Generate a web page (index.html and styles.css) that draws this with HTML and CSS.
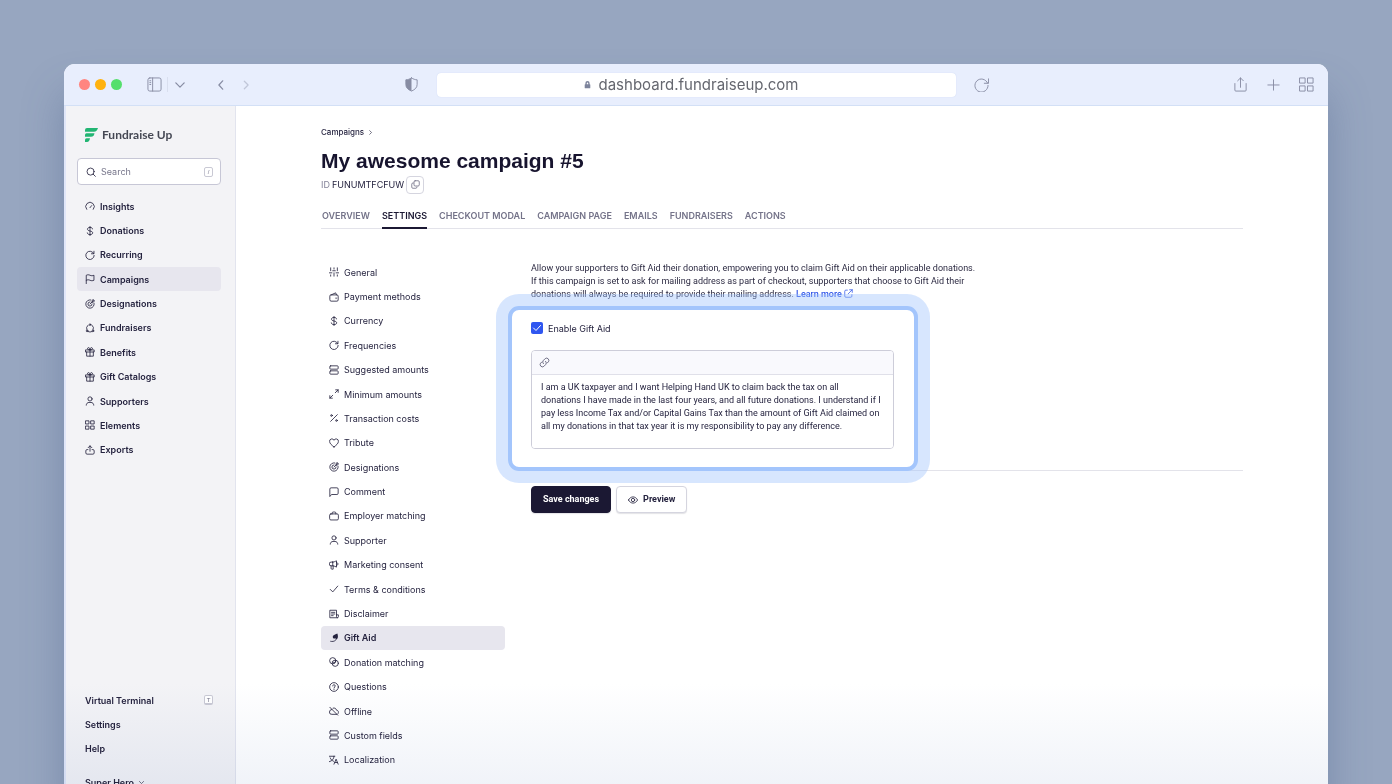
FILE: index.html
```html
<!DOCTYPE html>
<html lang="en">
<head>
<meta charset="utf-8">
<meta name="viewport" content="width=device-width, initial-scale=1">
<title>My awesome campaign #5 – Fundraise Up</title>
<link rel="stylesheet" href="styles.css">
</head>
<body>
<svg class="sprite" aria-hidden="true">
  <symbol id="gauge" viewBox="0 0 24 24"><path d="M4 20a10.300 10.300 0 1 1 16 0M12 16l4-5"/></symbol>
  <symbol id="dollar" viewBox="0 0 24 24"><path d="M12 1v22M18 7c0-2.300-2-3.500-6-3.500S6 5 6 7.500s2 3.700 6 4.500 6.500 2 6.500 4.500-2.500 4-6.500 4S5.500 19 5.500 16.500"/></symbol>
  <symbol id="refresh" viewBox="0 0 24 24"><path d="M21.500 3v6h-6M21 8.500A10 10 0 1 0 22 13"/></symbol>
  <symbol id="flag" viewBox="0 0 24 24"><path d="M3 23V3c3-1.500 6-1.500 9 0s6 1.500 9.500 0v12c-3.500 1.500-6.500 1.500-9.500 0s-6-1.500-9 0"/></symbol>
  <symbol id="target" viewBox="0 0 24 24"><path d="M14 2.200A10 10 0 1 0 21.800 10M12 7a5 5 0 1 0 5 5M12 12l6-6M17 7V3.500L20 1v3h3l-2.500 3z"/></symbol>
  <symbol id="ring" viewBox="0 0 24 24"><path d="M7 5.500a9 9 0 0 0-2.500 11M17 5.500a9 9 0 0 1 2.500 11M7 20.500a10 10 0 0 0 10 0"/><circle cx="12" cy="4" r="2"/><circle cx="5" cy="19" r="2"/><circle cx="19" cy="19" r="2"/></symbol>
  <symbol id="gift" viewBox="0 0 24 24"><path d="M2 7h20v5H2zM4 12v10h16V12M12 7v15M12 7C7 7 6 5.500 6 4s1.200-2.500 2.500-2.500C11 1.500 12 4 12 7c0-3 1-5.500 3.500-5.500C16.800 1.500 18 2.500 18 4s-1 3-6 3"/></symbol>
  <symbol id="person" viewBox="0 0 24 24"><circle cx="12" cy="7" r="5"/><path d="M3 22c0-4 3-6.500 6.500-6.500h5c3.500 0 6.500 2.500 6.500 6.500"/></symbol>
  <symbol id="grid" viewBox="0 0 24 24"><path d="M2 2h7.500v7.500H2zM14.500 2H22v7.500h-7.500zM2 14.500h7.500V22H2zM14.500 14.500H22V22h-7.500z"/></symbol>
  <symbol id="export" viewBox="0 0 24 24"><path d="M12 15V2M7.500 6.500 12 2l4.500 4.500M7 11H5a3 3 0 0 0-3 3v5a3 3 0 0 0 3 3h14a3 3 0 0 0 3-3v-5a3 3 0 0 0-3-3h-2"/></symbol>
  <symbol id="sliders" viewBox="0 0 24 24"><path d="M4 2v7M4 19v3M1 14h6M12 2v3M12 14v8M9 9h6M20 2v7M20 19v3M17 14h6"/></symbol>
  <symbol id="wallet" viewBox="0 0 24 24"><path d="M2 9a2 2 0 0 1 2-2h15a3 3 0 0 1 3 3v9a3 3 0 0 1-3 3H5a3 3 0 0 1-3-3zM5 7l11-5 2 5M17 14v2"/></symbol>
  <symbol id="rows" viewBox="0 0 24 24"><rect x="2" y="2" width="20" height="8" rx="2"/><rect x="2" y="14" width="20" height="8" rx="2"/></symbol>
  <symbol id="expand" viewBox="0 0 24 24"><path d="M16 2h6v6M22 2l-7 7M8 22H2v-6M2 22l7-7"/></symbol>
  <symbol id="percent" viewBox="0 0 24 24"><path d="M20 4 4 20"/><circle cx="6" cy="6" r="2"/><circle cx="18" cy="18" r="2"/></symbol>
  <symbol id="heart" viewBox="0 0 24 24"><path d="M12 21.500C6 17 1.500 13 1.500 8.500A5.500 5.500 0 0 1 12 5.500a5.500 5.500 0 0 1 10.500 3c0 4.500-4.500 8.500-10.500 13z"/></symbol>
  <symbol id="comment" viewBox="0 0 24 24"><path d="M2 22V5a3 3 0 0 1 3-3h14a3 3 0 0 1 3 3v10a3 3 0 0 1-3 3H7z"/></symbol>
  <symbol id="case" viewBox="0 0 24 24"><rect x="1.500" y="7" width="21" height="14.500" rx="3"/><path d="M7.500 7V5a2.500 2.500 0 0 1 2.500-2.500h4A2.500 2.500 0 0 1 16.500 5v2"/></symbol>
  <symbol id="megaphone" viewBox="0 0 24 24"><path d="M9 5H5a4 4 0 0 0 0 9h4c4 0 6 2 9 3V2c-3 1-5 3-9 3zM9 5v9M5 14v6a2 2 0 0 0 2 2h3v-8M18 6c5 0 5 7 0 7"/></symbol>
  <symbol id="check" viewBox="0 0 24 24"><path d="m3 13 6 6L21 5"/></symbol>
  <symbol id="document" viewBox="0 0 24 24"><path d="M18 14V3H2v18h18a2.500 2.500 0 0 0 2.500-2.500V14H18v4.500A2.500 2.500 0 0 0 20 21M6 8h8M6 12h8M6 16h4"/></symbol>
  <symbol id="giftaid" viewBox="0 0 24 24"><path d="M4 20c9 2 15-3 15-11"/><path class="solid" d="M9 9c0-4 5-5 11-8 2 5 2 10-1 14l-3-2c-4 1-7 0-7-4z"/></symbol>
  <symbol id="overlap" viewBox="0 0 24 24"><circle cx="9" cy="9" r="7.500"/><circle cx="15" cy="15" r="7.500"/><path d="m9 12 3 3 4-5"/></symbol>
  <symbol id="question" viewBox="0 0 24 24"><circle cx="12" cy="12" r="10.500"/><path d="M9 9.500C9 7.500 10.500 6.500 12 6.500s3 1 3 3c0 2-3 2.500-3 4.500M12 17v1"/></symbol>
  <symbol id="cloudoff" viewBox="0 0 24 24"><path d="m2 3 19 19M7 8a7 7 0 0 0-6 6.500A5.500 5.500 0 0 0 7 20h12M10 5c4-1 7 1 8 5 4 0 6 4.500 4 8"/></symbol>
  <symbol id="translate" viewBox="0 0 24 24"><path d="M1 3h13M3 7c1 4 4 6 8 8M12 3c0 6-4 11-11 13M12 22l5-12 5 12M14 18h6"/></symbol>
  <symbol id="search" viewBox="0 0 24 24"><circle cx="11" cy="11" r="8.500"/><path d="m17 17 5.500 5.500"/></symbol>
  <symbol id="copy" viewBox="0 0 24 24"><rect x="8" y="2" width="14" height="14" rx="3"/><path d="M6 8H5a3 3 0 0 0-3 3v8a3 3 0 0 0 3 3h8a3 3 0 0 0 3-3"/></symbol>
  <symbol id="external" viewBox="0 0 24 24"><path d="M9 3H5a3 3 0 0 0-3 3v13a3 3 0 0 0 3 3h13a3 3 0 0 0 3-3v-4M15 2h7v7M22 2 11 13"/></symbol>
  <symbol id="link" viewBox="0 0 24 24"><path d="M9.500 14.500a5 5 0 0 1 0-7l4-4a5 5 0 0 1 7 7L18 13M14.500 9.500a5 5 0 0 1 0 7l-4 4a5 5 0 0 1-7-7L6 11"/></symbol>
  <symbol id="eye" viewBox="0 0 24 24"><path d="M1 12c5-10 17-10 22 0-5 10-17 10-22 0z"/><circle cx="12" cy="12" r="4"/></symbol>
  <symbol id="right" viewBox="0 0 24 24"><path d="m8 3 9 9-9 9"/></symbol>
  <symbol id="left" viewBox="0 0 24 24"><path d="m16 2-9 10 9 10"/></symbol>
  <symbol id="down" viewBox="0 0 24 24"><path d="m2 7 10 10L22 7"/></symbol>
</svg>

<div class="window">
  <header class="toolbar">
    <div class="toolbar-left">
      <div class="lights"><span class="light red"></span><span class="light amber"></span><span class="light green"></span></div>
      <button class="tool panel" aria-label="Sidebar"><svg viewBox="0 0 16 16"><rect x="1" y="1" width="14" height="14" rx="2"/><path d="M6 1v14M3 4h1M3 6h1M3 8h1"/></svg></button>
      <button class="tool tabs-menu" aria-label="Tab groups"><svg class="small"><use href="#down"/></svg></button>
      <button class="tool back" aria-label="Back"><svg class="small"><use href="#left"/></svg></button>
      <button class="tool forward" aria-label="Forward"><svg class="small"><use href="#right"/></svg></button>
      <button class="tool shield" aria-label="Privacy report"><svg viewBox="0 0 16 16"><path d="M8 1c2 1.300 4 2 6 2v5c0 3.500-2.500 5.500-6 7-3.500-1.500-6-3.500-6-7V3c2 0 4-.7 6-2z"/><path class="solid" d="M8 1v14c-3.500-1.500-6-3.500-6-7V3c2 0 4-.7 6-2z"/></svg></button>
    </div>
    <div class="address">
      <svg viewBox="0 0 10 12"><path d="M3 6V4a2 2 0 0 1 4 0v2"/><rect class="solid" x="1" y="5.500" width="8" height="6" rx="1"/></svg>
      <span>dashboard.fundraiseup.com</span>
    </div>
    <div class="toolbar-right">
      <button class="tool reload" aria-label="Reload"><svg viewBox="0 0 16 16"><path d="M14.500 6.500A7 7 0 1 0 15 9M15.500 2v4.700H11"/></svg></button>
      <button class="tool" aria-label="Share"><svg viewBox="0 0 16 16"><path d="M2 7v7a1 1 0 0 0 1 1h10a1 1 0 0 0 1-1V7M8 11V1M5 4l3-3 3 3"/></svg></button>
      <button class="tool" aria-label="New tab"><svg viewBox="0 0 16 16"><path d="M8 3v11M2 8.500h12"/></svg></button>
      <button class="tool" aria-label="Tab overview"><svg viewBox="0 0 16 16"><path d="M1 1h5.500v5.500H1zM9.500 1H15v5.500H9.500zM1 9.500h5.500V15H1zM9.500 9.500H15V15H9.500z"/></svg></button>
    </div>
  </header>

  <div class="app">
    <aside class="sidebar">
      <a class="logo" href="#"><svg viewBox="0 0 14 14"><path d="M2 0h11q-1 3.700-4 3.700H0V2q0-2 2-2zM1.500 5.300h8q-.5 3.500-3.500 3.500H0V7q0-1.700 1.500-1.700zM1.500 10.300h3.500q-.5 3.700-3 3.700H0v-2q0-1.700 1.500-1.700z"/></svg><span>Fundraise Up</span></a>
      <label class="search"><svg class="icon"><use href="#search"/></svg><input type="text" placeholder="Search" aria-label="Search"><kbd class="key">/</kbd></label>
      <nav class="main-nav">
        <a href="#"><svg class="icon"><use href="#gauge"/></svg>Insights</a>
        <a href="#"><svg class="icon"><use href="#dollar"/></svg>Donations</a>
        <a href="#"><svg class="icon"><use href="#refresh"/></svg>Recurring</a>
        <a href="#" class="active"><svg class="icon"><use href="#flag"/></svg>Campaigns</a>
        <a href="#"><svg class="icon"><use href="#target"/></svg>Designations</a>
        <a href="#"><svg class="icon"><use href="#ring"/></svg>Fundraisers</a>
        <a href="#"><svg class="icon"><use href="#gift"/></svg>Benefits</a>
        <a href="#"><svg class="icon"><use href="#gift"/></svg>Gift Catalogs</a>
        <a href="#"><svg class="icon"><use href="#person"/></svg>Supporters</a>
        <a href="#"><svg class="icon"><use href="#grid"/></svg>Elements</a>
        <a href="#"><svg class="icon"><use href="#export"/></svg>Exports</a>
      </nav>
      <nav class="foot-nav">
        <a href="#">Virtual Terminal<kbd class="key raised">T</kbd></a>
        <a href="#">Settings</a>
        <a href="#">Help</a>
        <a href="#" class="account">Super Hero<svg class="mini"><use href="#down"/></svg></a>
      </nav>
    </aside>

    <main class="main">
      <nav class="crumbs"><a href="#">Campaigns</a><svg class="mini"><use href="#right"/></svg></nav>
      <h1>My awesome campaign #5</h1>
      <div class="id-row"><span class="muted">ID</span><span>FUNUMTFCFUW</span><button class="copy" aria-label="Copy ID"><svg><use href="#copy"/></svg></button></div>
      <nav class="tabs">
        <a href="#">OVERVIEW</a><a href="#" class="active">SETTINGS</a><a href="#">CHECKOUT MODAL</a><a href="#">CAMPAIGN PAGE</a><a href="#">EMAILS</a><a href="#">FUNDRAISERS</a><a href="#">ACTIONS</a>
      </nav>
      <div class="columns">
        <nav class="settings-nav">
          <a href="#"><svg class="icon"><use href="#sliders"/></svg>General</a>
          <a href="#"><svg class="icon"><use href="#wallet"/></svg>Payment methods</a>
          <a href="#"><svg class="icon"><use href="#dollar"/></svg>Currency</a>
          <a href="#"><svg class="icon"><use href="#refresh"/></svg>Frequencies</a>
          <a href="#"><svg class="icon"><use href="#rows"/></svg>Suggested amounts</a>
          <a href="#"><svg class="icon"><use href="#expand"/></svg>Minimum amounts</a>
          <a href="#"><svg class="icon"><use href="#percent"/></svg>Transaction costs</a>
          <a href="#"><svg class="icon"><use href="#heart"/></svg>Tribute</a>
          <a href="#"><svg class="icon"><use href="#target"/></svg>Designations</a>
          <a href="#"><svg class="icon"><use href="#comment"/></svg>Comment</a>
          <a href="#"><svg class="icon"><use href="#case"/></svg>Employer matching</a>
          <a href="#"><svg class="icon"><use href="#person"/></svg>Supporter</a>
          <a href="#"><svg class="icon"><use href="#megaphone"/></svg>Marketing consent</a>
          <a href="#"><svg class="icon"><use href="#check"/></svg>Terms &amp; conditions</a>
          <a href="#"><svg class="icon"><use href="#document"/></svg>Disclaimer</a>
          <a href="#" class="active"><svg class="icon"><use href="#giftaid"/></svg>Gift Aid</a>
          <a href="#"><svg class="icon"><use href="#overlap"/></svg>Donation matching</a>
          <a href="#"><svg class="icon"><use href="#question"/></svg>Questions</a>
          <a href="#"><svg class="icon"><use href="#cloudoff"/></svg>Offline</a>
          <a href="#"><svg class="icon"><use href="#rows"/></svg>Custom fields</a>
          <a href="#"><svg class="icon"><use href="#translate"/></svg>Localization</a>
        </nav>
        <form class="panel-form">
          <p class="intro">Allow your supporters to Gift Aid their donation, empowering you to claim Gift Aid on their applicable donations.<br>If this campaign is set to ask for mailing address as part of checkout, supporters that choose to Gift Aid their<br>donations will always be required to provide their mailing address. <a href="#">Learn more <svg><use href="#external"/></svg></a></p>
          <section class="spotlight">
            <label class="enable"><input type="checkbox" checked><svg viewBox="0 0 12 12"><path d="m2.500 6 2.500 2.500L9.500 3.500"/></svg><span>Enable Gift Aid</span></label>
            <div class="editor">
              <div class="editor-bar"><button type="button" aria-label="Insert link"><svg><use href="#link"/></svg></button></div>
              <textarea aria-label="Gift Aid declaration" rows="5">I am a UK taxpayer and I want Helping Hand UK to claim back the tax on all
donations I have made in the last four years, and all future donations. I understand if I
pay less Income Tax and/or Capital Gains Tax than the amount of Gift Aid claimed on
all my donations in that tax year it is my responsibility to pay any difference.</textarea>
            </div>
          </section>
          <div class="actions"><button type="button" class="btn primary">Save changes</button><button type="button" class="btn"><svg><use href="#eye"/></svg>Preview</button></div>
        </form>
      </div>
    </main>
  </div>
</div>
</body>
</html>
```
FILE: styles.css
```css
* { box-sizing: border-box; }

body {
  margin: 0;
  height: 100vh;
  padding: 64px 64px 0;
  overflow: hidden;
  background: #97a6c0;
  color: #25233f;
  font: 9px/13px Inter, "Liberation Sans", sans-serif;
}

a { color: inherit; text-decoration: none; }
button, input, textarea { font: inherit; color: inherit; }
button { padding: 0; border: 0; background: none; }

svg { fill: none; stroke: currentColor; stroke-width: 2; stroke-linecap: round; stroke-linejoin: round; flex: none; }
.solid { fill: currentColor; stroke: none; }
.sprite { display: none; }
.icon { width: 10px; height: 10px; }
.mini { width: 5px; height: 5px; stroke-width: 3; }

.window {
  position: relative;
  display: flex;
  flex-direction: column;
  height: calc(100vh - 54px);
  border-radius: 11px 11px 0 0;
  overflow: hidden;
  background: #fff;
  box-shadow: 0 30px 40px rgba(64, 86, 130, 0.35);
}

.window::after {
  content: "";
  position: absolute;
  inset: auto 0 0;
  height: 110px;
  background: linear-gradient(#fff, #eff2f8);
  mix-blend-mode: multiply;
  pointer-events: none;
}

/* Browser toolbar */
.toolbar {
  display: grid;
  grid-template-columns: 1fr 42% 1fr;
  align-items: center;
  height: 42px;
  padding: 0 14px 0 15px;
  border-bottom: 1px solid #d3e0f6;
  background: #e8eefd;
  color: #878ca3;
}
.toolbar-left, .toolbar-right { display: flex; align-items: center; }
.lights { display: flex; gap: 5px; margin-right: 25px; }
.light { width: 11px; height: 11px; border-radius: 50%; }
.red { background: #ff8580; }
.amber { background: #ffb20f; }
.green { background: #55df6c; }
.tool { display: flex; align-items: center; }
.tool svg { width: 15px; height: 15px; stroke-width: 1; }
.tool .small { width: 10px; height: 10px; stroke-width: 3; }
.panel { padding-right: 5px; border-right: 1px solid #d9dfef; }
.tabs-menu { margin-left: 7px; }
.back { margin-left: 31px; }
.forward { margin-left: 15px; opacity: 0.4; }
.shield { margin: 0 18px 0 auto; }
.address {
  display: flex;
  align-items: center;
  justify-content: center;
  gap: 8px;
  height: 24px;
  padding-right: 11px;
  border-radius: 4px;
  background: #fff;
  color: #65676f;
  font-size: 15px;
  box-shadow: 0 0 1px #bccbee;
}
.address svg { width: 7px; height: 9px; color: #7d849c; }
.toolbar-right { gap: 18px; }
.reload { margin: 0 auto 0 18px; }

/* App sidebar */
.app { display: grid; grid-template-columns: 172px 1fr; flex: 1; }
.sidebar {
  display: flex;
  flex-direction: column;
  padding: 20px 14px 0 11px;
  border-left: 2px solid #e0e6f8;
  border-right: 1px solid #e2e4ee;
  background: #f3f3f6;
  font-weight: 600;
}
.logo { display: flex; align-items: center; gap: 3px; height: 18px; padding-left: 8px; color: #454854; font: bold 12px/18px Lato, sans-serif; }
.logo svg { width: 14px; height: 14px; fill: #22b573; stroke: none; }
.search {
  display: flex;
  align-items: center;
  gap: 5px;
  height: 27px;
  margin: 14px 0 9px;
  padding: 0 7px 0 8px;
  border: 1px solid #c7c7d6;
  border-radius: 4px;
  background: #fff;
  font-weight: 400;
}
.search input { flex: 1; min-width: 0; padding: 0; border: 0; outline: 0; background: none; }
.search input::placeholder { color: #77768b; opacity: 1; }
.key {
  width: 9px;
  height: 10px;
  border: 1px solid #c9c9d4;
  border-radius: 2px;
  color: #77768b;
  font: 6px/8px "Liberation Sans", sans-serif;
  text-align: center;
}
.raised { margin-left: auto; border-bottom-width: 2px; background: #fff; }
.main-nav, .settings-nav { display: grid; grid-auto-rows: 1fr; }
.main-nav { min-height: 268px; }
.main-nav a, .settings-nav a, .foot-nav a { display: flex; align-items: center; gap: 5px; padding: 0 8px; border-radius: 4px; }
.main-nav a.active, .settings-nav a.active { background: #e7e6ee; }
.foot-nav { margin-top: auto; }
.foot-nav a { height: 24px; }
.foot-nav .account { margin-top: 10px; }

/* Page content */
.main { display: flex; flex-direction: column; min-width: 0; padding: 20px 85px 22px; }
.crumbs { display: flex; align-items: center; gap: 4px; font-size: 8px; line-height: 12px; font-weight: 500; }
h1 { margin: 10px 0 2px; color: #17142e; font: bold 21px/26px "Liberation Sans", sans-serif; }
.id-row { display: flex; align-items: center; gap: 2px; height: 17px; }
.muted { color: #85849a; }
.copy { display: flex; align-items: center; justify-content: center; width: 18px; height: 18px; border: 1px solid #d5d5df; border-radius: 4px; color: #65647c; }
.copy svg { width: 9px; height: 9px; }
.tabs { display: flex; gap: 12px; height: 26px; margin-top: 10px; padding-left: 1px; border-bottom: 1px solid #e3e3ea; color: #747389; font-weight: 600; }
.tabs a { height: 26px; line-height: 26px; }
.tabs .active { border-bottom: 2px solid #1b1833; color: #1b1833; }
.columns { display: grid; grid-template-columns: 184px 1fr; gap: 26px; margin-top: 31px; }
.settings-nav { min-height: 512px; align-self: start; }
.settings-nav .active { font-weight: 600; }

.panel-form { padding-top: 2px; }
.intro, textarea { font-family: Roboto, sans-serif; }
.intro { margin: 0 0 5px; color: #2c2a42; white-space: nowrap; }
.intro a { color: #3055e8; font-weight: 500; }
.intro svg { width: 9px; height: 9px; vertical-align: -1px; }
.spotlight {
  position: relative;
  width: 410px;
  margin-left: -23px;
  padding: 12px 20px 18px 19px;
  border: 4px solid #a3c5fc;
  border-radius: 11px;
  background: #fff;
  box-shadow: 0 0 0 12px rgba(160, 196, 252, 0.42);
}
.enable { display: flex; align-items: center; height: 12px; gap: 5px; }
.enable input { appearance: none; width: 12px; height: 12px; margin: 0; border-radius: 2px; background: #2f56f0; }
.enable svg { width: 12px; height: 12px; margin-left: -17px; color: #fff; stroke-width: 1; }
.editor { margin-top: 16px; border: 1px solid #cdcdd9; border-radius: 4px; overflow: hidden; }
.editor-bar { display: flex; align-items: center; height: 24px; padding: 0 7px; border-bottom: 1px solid #e0e0e9; background: #f9f9fd; color: #65647c; }
.editor-bar button { display: flex; }
.editor-bar svg { width: 11px; height: 11px; }
textarea { display: block; width: 100%; padding: 6px 9px 2px; border: 0; outline: 0; resize: none; background: #fff; white-space: pre; overflow: hidden; }
.actions { display: flex; gap: 5px; margin-top: -1px; padding-top: 15px; border-top: 1px solid #e3e3ea; }
.btn { display: flex; align-items: center; gap: 5px; height: 27px; padding: 0 11px; border: 1px solid #d5d5df; border-radius: 4px; background: #fff; font: bold 9px/13px Roboto, sans-serif; box-shadow: 0 1px 1px rgba(27, 24, 51, 0.12); }
.btn svg { width: 10px; height: 10px; }
.primary { border-color: #1b1833; background: #1b1833; color: #fff; }
```
